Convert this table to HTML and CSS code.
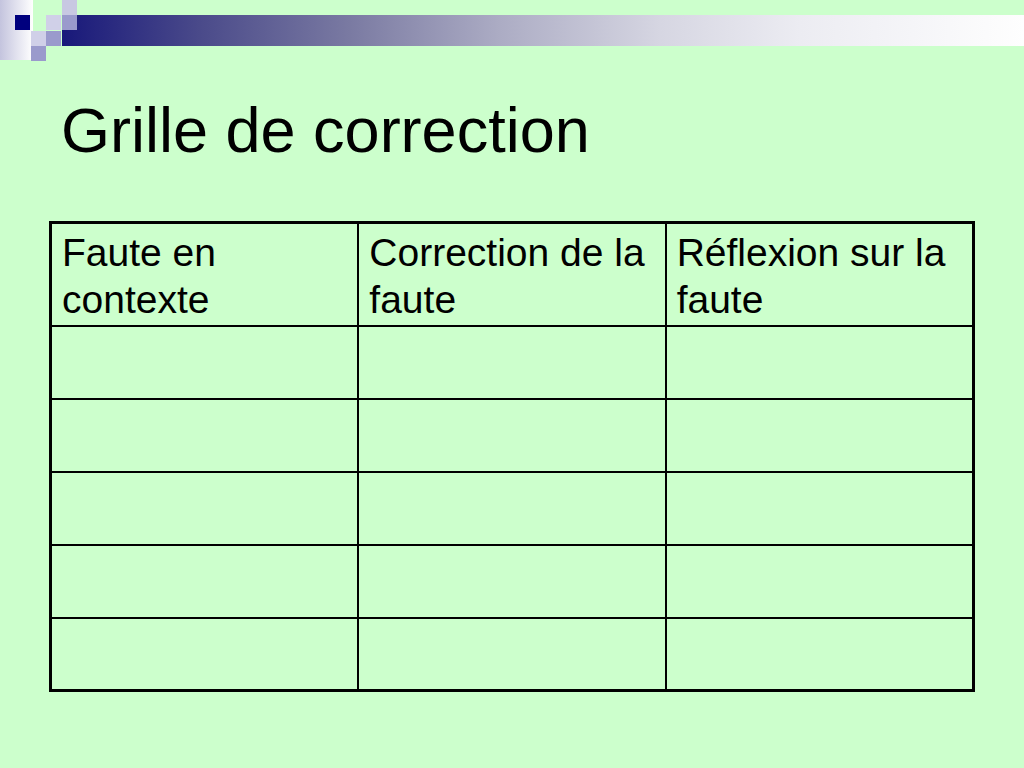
FILE: index.html
```html
<!DOCTYPE html>
<html lang="fr">
<head>
<meta charset="utf-8">
<title>Grille de correction</title>
<link rel="stylesheet" href="styles.css">
</head>
<body>
<div class="slide">
  <svg class="deco" width="1024" height="62" viewBox="0 0 1024 62" aria-hidden="true">
    <defs>
      <linearGradient id="side" x1="0" y1="0" x2="1" y2="0">
        <stop offset="0" stop-color="#c4c4de"/>
        <stop offset="1" stop-color="#ffffff"/>
      </linearGradient>
      <linearGradient id="bar" gradientUnits="userSpaceOnUse" x1="62" y1="0" x2="1024" y2="0">
        <stop offset="0" stop-color="#18187a"/>
        <stop offset="0.143" stop-color="#4a4a8a"/>
        <stop offset="0.299" stop-color="#7a7aa2"/>
        <stop offset="0.455" stop-color="#acacc4"/>
        <stop offset="0.622" stop-color="#d6d6e2"/>
        <stop offset="0.767" stop-color="#ececf2"/>
        <stop offset="1" stop-color="#fefefe"/>
      </linearGradient>
    </defs>
    <rect x="0" y="0" width="33" height="60" fill="url(#side)"/>
    <rect x="62" y="15" width="962" height="31" fill="url(#bar)"/>
    <rect x="15" y="15" width="15" height="15" fill="#00007e"/>
    <rect x="62" y="0" width="15" height="15" fill="#c8c8e2"/>
    <rect x="46" y="15" width="15" height="15" fill="#d0d0e8"/>
    <rect x="62" y="15" width="15" height="15" fill="#9a9acc"/>
    <rect x="31" y="31" width="15" height="15" fill="#d0d0e8"/>
    <rect x="46" y="31" width="15" height="15" fill="#9a9acc"/>
    <rect x="31" y="46" width="15" height="15" fill="#9a9acc"/>
  </svg>

  <h1 class="title">Grille de correction</h1>

  <table class="grid">
    <tr class="head">
      <td>Faute en contexte</td>
      <td>Correction de la faute</td>
      <td>Réflexion sur la faute</td>
    </tr>
    <tr class="row"><td></td><td></td><td></td></tr>
    <tr class="row"><td></td><td></td><td></td></tr>
    <tr class="row"><td></td><td></td><td></td></tr>
    <tr class="row"><td></td><td></td><td></td></tr>
    <tr class="row last"><td></td><td></td><td></td></tr>
  </table>
</div>
</body>
</html>
```

FILE: styles.css
```css
html, body {
  margin: 0;
  padding: 0;
}

body {
  background: #ccffcc;
  font-family: "Liberation Sans", Arial, sans-serif;
  color: #000;
}

.slide {
  width: 1024px;
  height: 768px;
  background: #ccffcc;
  overflow: hidden;
}

.deco {
  display: block;
}

.title {
  margin: 37px 0 0 61px;
  font-size: 63px;
  font-weight: normal;
  line-height: 62px;
  height: 62px;
}

.grid {
  margin: 60px 0 0 49px;
  width: 926px;
  border: 3px solid #000;
  border-spacing: 0;
  table-layout: fixed;
}

.grid td {
  box-sizing: border-box;
  border-right: 2px solid #000;
  border-bottom: 2px solid #000;
  padding: 5px 6px 0 10px;
  vertical-align: top;
  font-size: 39px;
  line-height: 47px;
  width: 307px;
}

.grid td:last-child {
  border-right: 0;
  width: 305px;
}

.grid .head td {
  height: 103px;
}

.grid .row td {
  height: 73px;
}

.grid .row.last td {
  border-bottom: 0;
  height: 70px;
}
```
